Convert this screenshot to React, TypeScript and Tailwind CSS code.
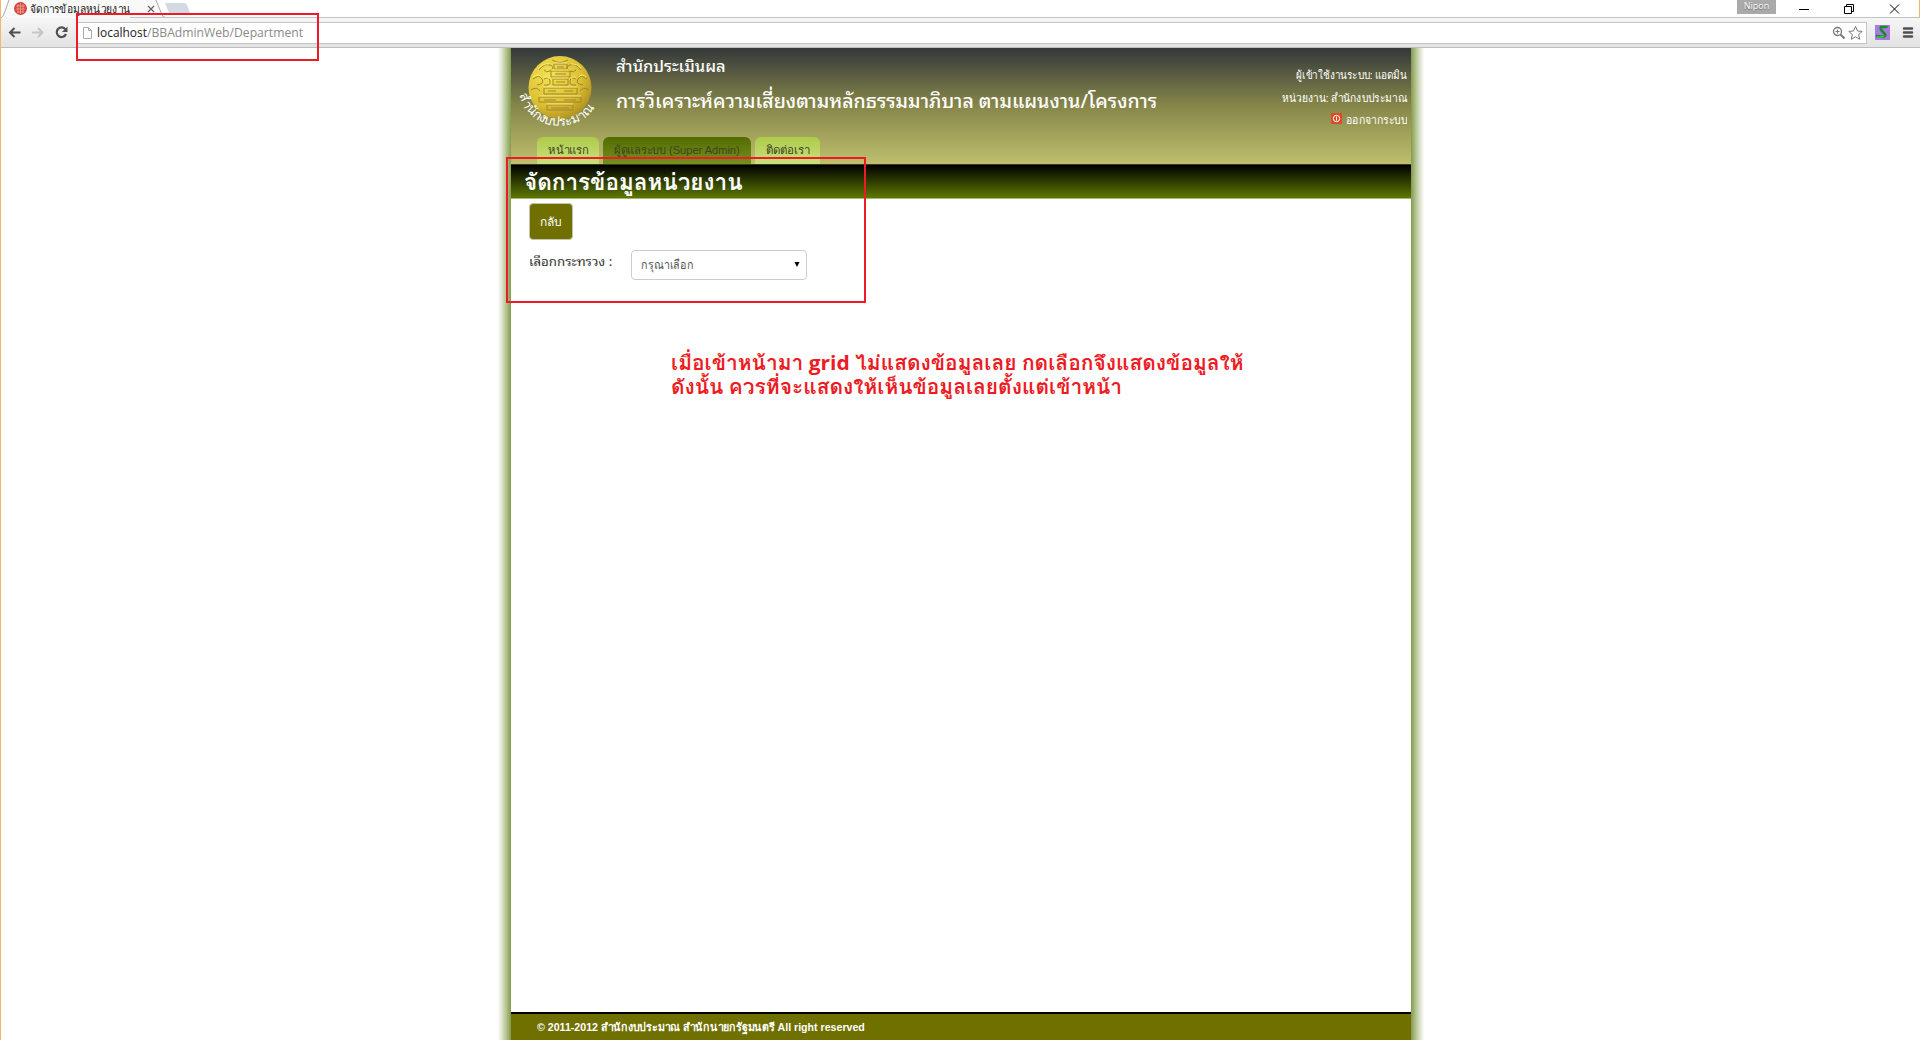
import React, { useLayoutEffect, useRef } from 'react';

const thai = "font-['Liberation_Sans',sans-serif]";
const looped = "font-['Noto_Sans_Thai_Looped','Liberation_Sans',sans-serif]";

/* Fits one line of text to a given width. */
function Line({ w, children, className = '' }: { w: number; children: string; className?: string }) {
  const outer = useRef<HTMLSpanElement>(null);
  const inner = useRef<HTMLSpanElement>(null);
  useLayoutEffect(() => {
    if (!outer.current || !inner.current) return;
    outer.current.style.width = `${w}px`;
    inner.current.style.transform = `scaleX(${w / inner.current.offsetWidth})`;
  }, [w, children]);
  return (
    <span ref={outer} className={'inline-block whitespace-nowrap text-left align-top ' + className}>
      <span ref={inner} className="inline-block origin-left align-top">{children}</span>
    </span>
  );
}

function TabStrip() {
  return (
    <div className="relative flex h-[18px] items-start border-r border-[#f5b56b] bg-white">
      <svg className="absolute -left-px top-0" width="200" height="18" viewBox="0 0 200 18">
        <path d="M2 18 L9 0 H156 L163 16 Q164 18 167 18 Z" fill="#f9f9f9" />
        <path d="M1 18 Q3 17 4 14 L9 0" fill="none" stroke="#aaa" />
        <path d="M165 3 H184 Q186 3 187 5 L190 13 Q190 15 187 15 H173 Q170 15 169 13 Z" fill="#d3dae3" />
        <path d="M156 0 L162 15 Q163 17.5 166 17.5 H200" fill="none" stroke="#aaa" />
        <circle cx="20.500" cy="8.500" r="6.500" fill="#d4483c" />
        <path d="M16 6h9M16 9h9M17 12h7M18 4v9M20.500 3v11M23 4v9" stroke="#f0b0a8" strokeWidth=".7" />
        <path d="M148 6 l6 6 M154 6 l-6 6" stroke="#666" strokeWidth="1.300" />
      </svg>
      <Line w={100} className={thai + ' relative ml-[29px] h-[18px] text-[11.500px] leading-[18px] text-[#222]'}>จัดการข้อมูลหน่วยงาน</Line>
      <div className="ml-auto h-px flex-1 translate-y-[17px] bg-[#c4c4c4]" />
      <div className="flex border-b border-[#c4c4c4]">
        <span className="mr-[23px] h-[14px] w-[39px] bg-[#aaa] text-center font-['Open_Sans'] text-[9px] leading-[12px] text-white [text-shadow:0_1px_1px_#666]">Nipon</span>
        <svg width="120" height="17" viewBox="0 0 120 17" fill="none" stroke="#000">
          <path d="M0 9.500h10" />
          <path d="M45.500 6.500h7v7h-7zM47.500 6.500v-2h7v7h-2" />
          <path d="M91 4.500l9 9M100 4.500l-9 9" />
        </svg>
      </div>
    </div>
  );
}

function Toolbar() {
  return (
    <div className="flex h-[30px] items-start border-b border-[#bdbdbd] bg-linear-to-b/srgb from-[#f6f6f6] to-[#e3e3e3]">
      <svg width="76" height="29" viewBox="1 0 76 29" fill="none">
        <path d="M20.500 14.500H10M14.500 10l-4.500 4.500l4.500 4.500" stroke="#505050" strokeWidth="2" />
        <path d="M32 14.500h10.500M38 10l4.500 4.500l-4.500 4.500" stroke="#c5c5c5" strokeWidth="2" />
        <path d="M65.500 11.500A4.800 4.800 0 1 0 66 16" stroke="#505050" strokeWidth="2.200" />
        <path d="M67.500 8.500v5.500h-5.500z" fill="#505050" />
      </svg>
      <div className="mt-[4px] flex h-[22px] flex-1 items-center border border-[#c4c4c4] bg-white">
        <svg width="19" height="20" viewBox="0 0 19 20" fill="none" stroke="#aaa">
          <path d="M5.500 4.500h5l3 3v8h-8zM10.500 4.500v3h3" />
        </svg>
        <span className="whitespace-nowrap font-['Open_Sans'] text-[12.400px] leading-[20px] text-[#8a8a8a]">
          <Line w={50} className="text-[#222]">localhost</Line>
          <Line w={156}>/BBAdminWeb/Department</Line>
        </span>
        <svg className="ml-auto" width="34" height="20" viewBox="0 0 34 20" fill="none" stroke="#777">
          <circle cx="5.500" cy="8.500" r="4" strokeWidth="1.300" />
          <path d="M3.500 8.500h4M5.500 6.500v4" />
          <path d="M8.500 11.500l4 4" strokeWidth="2" />
          <path d="M23.500 3.500l2 4.500 4.700.4-3.500 3.200 1 4.700-4.200-2.500-4.200 2.500 1-4.700-3.500-3.200 4.700-.4z" />
        </svg>
      </div>
      <svg width="53" height="28" viewBox="0 0 53 28" fill="none">
        <rect x="8" y="7" width="15" height="15" fill="#a57be0" />
        <path d="M19.500 9h-5.500q-1 2 1.500 4.500t3 3.500q-1 3-8.500 1" stroke="#1a8a2c" strokeWidth="2.600" strokeLinecap="round" />
        <path d="M10 18.500q4 1.500 7-.5" stroke="#3fd04c" strokeWidth="1.300" />
        <path d="M37 10.500h8M37 14.500h8M37 18.500h8" stroke="#505050" strokeWidth="2.500" strokeLinecap="round" />
      </svg>
    </div>
  );
}

function Emblem() {
  return (
    <svg className="absolute left-[5px] top-[1px]" width="90" height="90" viewBox="0 0 90 90">
      <defs>
        <radialGradient id="gold" cx=".35" cy=".3" r=".8">
          <stop offset="0" stopColor="#f2e354" />
          <stop offset=".6" stopColor="#dcc034" />
          <stop offset="1" stopColor="#a98a1c" />
        </radialGradient>
        <path id="rim" d="M4 46 A40.500 38 0 0 0 84 44" />
      </defs>
      <circle cx="44" cy="38.500" r="31.500" fill="url(#gold)" />
      <g fill="none" stroke="#a3862a" strokeWidth="1">
        <path d="M38 15h13v5H38zM35 22h19v6H35zM37 30h15v6H37zM28 39h33v6H28zM23 48h42v5H23zM31 56h26v5H31z" />
        <path d="M23 21q5-7 11-5t0 6q-4 2-6-1M65 21q-5-7-11-5t0 6q4 2 6-1M17 30q6-5 9 0t-5 6M71 30q-6-5-9 0t5 6M15 41q6-4 9 1M73 41q-6-4-9 1M28 30q5-3 6 2t-6 4M60 30q-5-3-6 2t6 4M36 11q8 5 16 0" />
        <path d="M41 18h7M39 25h11M40 33h9M32 42h8M48 42h9M28 51h12M48 51h12M35 59h18" />
      </g>
      <g fill="none" stroke="#fff68a" strokeWidth=".8">
        <path d="M38 14h13M35 21h19M37 29h15M28 38h33M23 47h42M31 55h26M22 20q5-6 11-5M55 15q6-1 10 4M17 28q6-4 8 0M63 28q3-4 7 0M27 29q5-3 6 1M55 30q3-4 5-1" />
      </g>
      <text fill="#fff" fontSize="13" fontFamily="Liberation Sans, sans-serif"><textPath href="#rim">สำนักงบประมาณ</textPath></text>
    </svg>
  );
}

function Header() {
  return (
    <header className={thai + ' relative flex h-[116px] flex-col bg-linear-to-b/srgb from-[#33383a] via-[#858549] via-[49%] to-[#bfbf6e] text-white'}>
      <Emblem />
      <div className="flex h-[89px] justify-between pl-[105px] pr-[4px]">
        <div className={looped + ' whitespace-nowrap'}>
          <div className="mt-[5px] h-[24px] text-[16px] font-medium leading-[24px]"><Line w={110}>สำนักประเมินผล</Line></div>
          <div className="mt-[7px] h-[30px] text-[20px] font-medium leading-[30px]"><Line w={541}>การวิเคราะห์ความเสี่ยงตามหลักธรรมมาภิบาล ตามแผนงาน/โครงการ</Line></div>
        </div>
        <div className="mt-[16px] whitespace-nowrap text-right text-[11.500px] leading-[22.500px]">
          <div><Line w={111}>ผู้เข้าใช้งานระบบ: แอดมิน</Line></div>
          <div><Line w={125}>หน่วยงาน: สำนักงบประมาณ</Line></div>
          <div className="flex items-center justify-end gap-[4px]">
            <svg className="-mt-[3px]" width="11" height="11" viewBox="0 0 11 11" fill="none" stroke="#fff"><rect width="11" height="11" rx="1" fill="#dc4a26" stroke="none" /><circle cx="5.500" cy="5.500" r="3.200" /><path d="M5.500 3.500v4" /></svg>
            <Line w={61}>ออกจากระบบ</Line>
          </div>
        </div>
      </div>
      <nav className="flex h-[27px] pl-[26px] text-center text-[11.500px] leading-[27px] text-[#3c4421]">
        <a className="mr-[4px] w-[62px] rounded-t-[6px] bg-linear-to-b/srgb from-[#aecb4b] to-[#c9df7d]"><Line w={41}>หน้าแรก</Line></a>
        <a className="mr-[4px] w-[148px] rounded-t-[6px] bg-linear-to-b/srgb from-[#526c00] to-[#768f1f]"><Line w={126}>ผู้ดูแลระบบ (Super Admin)</Line></a>
        <a className="w-[65px] rounded-t-[6px] bg-linear-to-b/srgb from-[#aecb4b] to-[#c9df7d]"><Line w={44}>ติดต่อเรา</Line></a>
      </nav>
    </header>
  );
}

export default function App() {
  return (
    <div className="relative flex h-[1040px] w-[1920px] flex-col overflow-hidden border-l border-[#f5b56b] bg-white">
      <TabStrip />
      <Toolbar />
      <div className="flex min-h-0 flex-1 pl-[497px]">
        <div className="w-[13px] bg-linear-to-l/srgb from-[#839c4c] via-[#c5d0a9] to-white" />
        <main className="flex w-[900px] flex-col">
          <Header />
          <h1 className="h-[35px] border-b border-t border-b-[#a6b76e] border-t-[#3c3d12] bg-linear-to-b/srgb from-black to-[#5d7900] pl-[13px] font-['Loma','Liberation_Sans',sans-serif] text-[23px] font-bold leading-[35px] text-white"><Line w={219}>จัดการข้อมูลหน่วยงาน</Line></h1>
          <section className={thai + ' flex-1 pl-[18px] pt-[4px] text-[#333]'}>
            <button className="block h-[37px] w-[44px] rounded-[4px] border border-[#c4c4b4] bg-[#707000] text-[12px] leading-[34px] text-white"><Line w={22}>กลับ</Line></button>
            <div className="mt-[10px] flex">
              <label className={looped + ' w-[102px] text-[12.500px] leading-[21px]'}><Line w={83}>เลือกกระทรวง :</Line></label>
              <div className="flex h-[30px] w-[176px] items-center justify-between rounded-[4px] border border-[#ccc] px-[9px] text-[12.500px] leading-[30px] text-[#555]">
                <Line w={53}>กรุณาเลือก</Line>
                <svg className="-mr-[3px]" width="6" height="6" viewBox="0 0 6 6"><path d="M.5 0h5L3 5z" fill="#000" /></svg>
              </div>
            </div>
          </section>
          <footer className="h-[28px] border-t-2 border-black bg-[#707000] pl-[26px] font-['Liberation_Sans',sans-serif] text-[11px] font-bold leading-[27px] text-white"><Line w={328}>© 2011-2012 สำนักงบประมาณ สำนักนายกรัฐมนตรี All right reserved</Line></footer>
        </main>
        <div className="w-[13px] bg-linear-to-r/srgb from-[#839c4c] via-[#c5d0a9] to-white" />
      </div>
      <div className="absolute left-[75px] top-[13px] h-[48px] w-[243px] border-2 border-[#ed1c24]" />
      <div className="absolute left-[505px] top-[157px] h-[146px] w-[360px] border-2 border-[#ed1c24]" />
      <div className="absolute left-[670px] top-[351px] font-['Open_Sans','Loma',sans-serif] text-[20px] font-bold leading-[24px] text-[#ed1c24]">
        <div className="h-[24px]"><Line w={573}>เมื่อเข้าหน้ามา grid ไม่แสดงข้อมูลเลย กดเลือกจึงแสดงข้อมูลให้</Line></div>
        <div className="h-[24px]"><Line w={451}>ดังนั้น ควรที่จะแสดงให้เห็นข้อมูลเลยตั้งแต่เข้าหน้า</Line></div>
      </div>
    </div>
  );
}
